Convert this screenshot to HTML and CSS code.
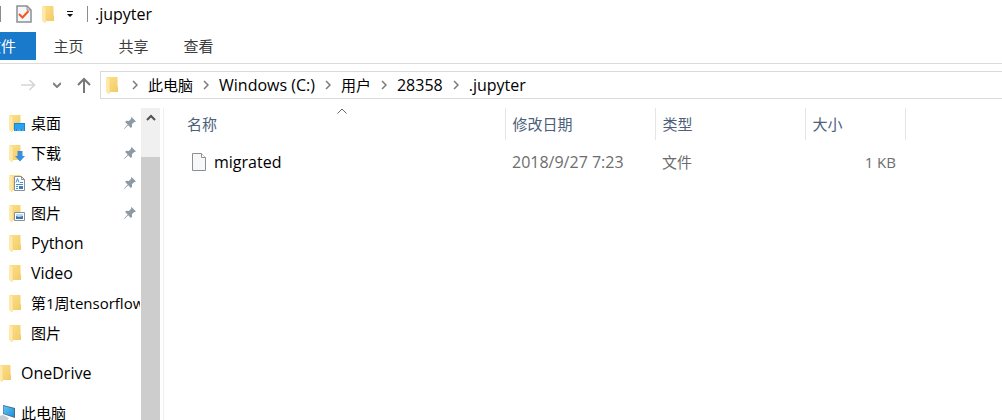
FILE: index.html
```html
<!DOCTYPE html>
<html lang="zh-CN">
<head>
    <meta charset="UTF-8">
    <meta name="viewport" content="width=device-width, initial-scale=1.0">
    <title>.jupyter</title>
    <link rel="stylesheet" href="styles.css">
</head>
<body>
    <!-- Shared icons -->
    <svg class="icon-defs" aria-hidden="true">
        <defs>
            <linearGradient id="fold-back" x1="0" y1="0" x2="1" y2="1">
                <stop offset="0" stop-color="#ffe08a"/>
                <stop offset="1" stop-color="#f0cb66"/>
            </linearGradient>
            <linearGradient id="screen-blue" x1="0" y1="0" x2="1" y2="1">
                <stop offset="0" stop-color="#69c3f2"/>
                <stop offset="1" stop-color="#1f8fd8"/>
            </linearGradient>
        </defs>
        <symbol id="folder" viewBox="0 0 16 18">
            <path d="M1 1h10.500v9.500h.5V16H1z" fill="url(#fold-back)"/>
            <path d="M0 1l4 2v13l-1.500 2L0 16z" fill="#ffe9a8"/>
            <path d="M4 3v13l-1.500 2" fill="none" stroke="#f3d27a" stroke-width=".6"/>
        </symbol>
        <symbol id="pin" viewBox="0 0 12 12">
            <path d="M7.500 0L12 4.500l-1.300.6-.5-.2-2.300 2.400.2 2.500-1.200 1.100-2.700-2.700L.6 11.700 0 12l.3-.7 3.400-3.700L1.100 5l1.100-1.200 2.600.2L7.200 1.700 6.900 1z" fill="#8d99a3"/>
        </symbol>
        <symbol id="chevron" viewBox="0 0 6 10">
            <path d="M1 1l4 4-4 4" fill="none" stroke="#7a7a7a" stroke-width="1.500"/>
        </symbol>
    </svg>

    <div class="window">
        <header class="title-bar">
            <span class="divider"></span>
            <button class="tool check-tool" aria-label="属性">
                <svg width="16" height="18" viewBox="0 0 16 18">
                    <path d="M1 1h10l4 4v12H1z" fill="#f4f6f9" stroke="#8b8f94" stroke-width="1.500"/>
                    <path d="M11 1v4h4" fill="none" stroke="#8b8f94"/>
                    <path d="M3 9l3.500 3.500L12.500 6" fill="none" stroke="#ee5a1c" stroke-width="2"/>
                </svg>
            </button>
            <button class="tool folder-tool" aria-label="新建文件夹">
                <svg width="16" height="18"><use href="#folder"/></svg>
            </button>
            <button class="tool menu-tool" aria-label="自定义快速访问工具栏">
                <svg width="8" height="8" viewBox="0 0 8 8">
                    <path d="M1 1h6v1H1zM1 4h6L4 7z" fill="#111"/>
                </svg>
            </button>
            <span class="divider"></span>
            <h1 class="title latin">.jupyter</h1>
        </header>

        <nav class="ribbon">
            <button class="tab file-tab"><span>文件</span></button>
            <button class="tab">主页</button>
            <button class="tab">共享</button>
            <button class="tab">查看</button>
        </nav>

        <div class="nav-bar">
            <div class="nav-buttons">
                <button class="tool" aria-label="前进" disabled>
                    <svg width="15" height="12" viewBox="0 0 15 12">
                        <path d="M0 6h14M8.500 1l5 5-5 5" fill="none" stroke="#d6d6d6" stroke-width="1.700"/>
                    </svg>
                </button>
                <button class="tool" aria-label="最近浏览的位置">
                    <svg width="8" height="6" viewBox="0 0 8 6">
                        <path d="M0 1l4 4 4-4" fill="none" stroke="#808080" stroke-width="2"/>
                    </svg>
                </button>
                <button class="tool" aria-label="上移">
                    <svg width="14" height="16" viewBox="0 0 14 16">
                        <path d="M7 16V2M1 8l6-6 6 6" fill="none" stroke="#777" stroke-width="2"/>
                    </svg>
                </button>
            </div>
            <div class="address">
                <svg width="16" height="18"><use href="#folder"/></svg>
                <svg class="sep" width="6" height="10"><use href="#chevron"/></svg>
                <a href="#">此电脑</a>
                <svg class="sep" width="6" height="10"><use href="#chevron"/></svg>
                <a class="latin" href="#">Windows (C:)</a>
                <svg class="sep" width="6" height="10"><use href="#chevron"/></svg>
                <a href="#">用户</a>
                <svg class="sep" width="6" height="10"><use href="#chevron"/></svg>
                <a class="latin" href="#">28358</a>
                <svg class="sep" width="6" height="10"><use href="#chevron"/></svg>
                <a class="latin" href="#">.jupyter</a>
            </div>
        </div>

        <div class="content">
            <aside class="sidebar">
                <ul class="tree">
                    <li><a class="item" href="#">
                        <svg width="16" height="18" viewBox="0 0 16 18">
                            <use href="#folder" width="16" height="18"/>
                            <rect x="5" y="9" width="11" height="8" fill="#1386dc"/>
                            <path d="M6 10h9v5H6z" fill="#2ba2f0"/>
                            <path d="M6 16h1M8 16h4M13 16h2" stroke="#9bd7ff" stroke-width=".8"/>
                        </svg>
                        <span>桌面</span>
                        <svg class="pin" width="12" height="12"><use href="#pin"/></svg>
                    </a></li>
                    <li><a class="item" href="#">
                        <svg width="16" height="18" viewBox="0 0 16 18">
                            <use href="#folder" width="16" height="18"/>
                            <path d="M8.500 7h5v5H16l-5 5.500L6 12h2.500z" fill="#3b8ede"/>
                        </svg>
                        <span>下载</span>
                        <svg class="pin" width="12" height="12"><use href="#pin"/></svg>
                    </a></li>
                    <li><a class="item" href="#">
                        <svg width="16" height="18" viewBox="0 0 16 18">
                            <use href="#folder" width="16" height="18"/>
                            <path d="M5.500 2.500h7l3 3v11h-10z" fill="#fff" stroke="#8a8f94"/>
                            <path d="M12.500 2.500v3h3" fill="none" stroke="#8a8f94"/>
                            <path d="M7 8.500l1.500-4 1.500 4M7 10.500h7M11 8.500h3M7 12.500h2M7 14.500h2" fill="none" stroke="#3f8fd2"/>
                            <path d="M10 12h4v3h-4z" fill="#3f7fb5"/>
                        </svg>
                        <span>文档</span>
                        <svg class="pin" width="12" height="12"><use href="#pin"/></svg>
                    </a></li>
                    <li><a class="item" href="#">
                        <svg width="16" height="18" viewBox="0 0 16 18">
                            <use href="#folder" width="16" height="18"/>
                            <path d="M5.500 8.500h10v8h-10z" fill="#fff" stroke="#8a8f94"/>
                            <path d="M7 10h7v5H7z" fill="#b9dcf5"/>
                            <path d="M7 12l3 1 4-1v3H7z" fill="#3a76ad"/>
                        </svg>
                        <span>图片</span>
                        <svg class="pin" width="12" height="12"><use href="#pin"/></svg>
                    </a></li>
                    <li><a class="item" href="#"><svg width="16" height="18"><use href="#folder"/></svg><span class="latin">Python</span></a></li>
                    <li><a class="item" href="#"><svg width="16" height="18"><use href="#folder"/></svg><span class="latin">Video</span></a></li>
                    <li><a class="item" href="#"><svg width="16" height="18"><use href="#folder"/></svg><span>第1周tensorflow</span></a></li>
                    <li><a class="item" href="#"><svg width="16" height="18"><use href="#folder"/></svg><span>图片</span></a></li>
                    <li class="root"><a class="item" href="#"><svg width="16" height="18"><use href="#folder"/></svg><span class="latin">OneDrive</span></a></li>
                    <li class="root"><a class="item" href="#">
                        <svg width="16" height="18" viewBox="0 0 16 18">
                            <path d="M4 1l12 3v10L4 10z" fill="#3d6e91"/>
                            <path d="M4.500 2L15 4.700v8L4.500 9.500z" fill="url(#screen-blue)"/>
                            <path d="M0 12l4-1 6 3-3 4H0z" fill="#c3ccd3"/>
                        </svg>
                        <span>此电脑</span>
                    </a></li>
                </ul>
                <div class="scrollbar">
                    <button class="scroll-up" aria-label="向上滚动">
                        <svg width="10" height="8" viewBox="0 0 10 8">
                            <path d="M1 6l4-4 4 4" fill="none" stroke="#505050" stroke-width="2"/>
                        </svg>
                    </button>
                    <div class="scroll-thumb"></div>
                </div>
            </aside>

            <main class="files">
                <table class="file-table">
                    <thead>
                        <tr>
                            <th class="name">
                                <svg class="sort" width="10" height="6" viewBox="0 0 10 6">
                                    <path d="M.5 5.500L5 1l4.500 4.500" fill="none" stroke="#666"/>
                                </svg>
                                名称
                            </th>
                            <th class="date">修改日期</th>
                            <th class="type">类型</th>
                            <th class="size">大小</th>
                        </tr>
                    </thead>
                    <tbody>
                        <tr>
                            <td class="name">
                                <a class="file" href="#">
                                    <svg width="16" height="18" viewBox="0 0 16 18">
                                        <path d="M1.500.5h9l4 4v13h-13z" fill="#f7f8f9" stroke="#8e8e8e"/>
                                        <path d="M10.500.5v4h4" fill="#fff" stroke="#8e8e8e"/>
                                    </svg>
                                    <span class="latin">migrated</span>
                                </a>
                            </td>
                            <td class="date latin">2018/9/27 7:23</td>
                            <td class="type">文件</td>
                            <td class="size">1 KB</td>
                        </tr>
                    </tbody>
                </table>
            </main>
        </div>
    </div>
</body>
</html>
```

FILE: styles.css
```css
* {
    box-sizing: border-box;
}
body {
    margin: 0;
    background-color: #ffffff;
    color: #000000;
    font-family: "Open Sans", "Noto Sans CJK SC", sans-serif;
    font-size: 15px;
    line-height: 20px;
}
svg {
    display: block;
    flex: none;
}
a {
    color: inherit;
    text-decoration: none;
}
button {
    padding: 0;
    border: none;
    background: none;
    font: inherit;
    color: inherit;
}
.latin {
    font-size: 16px;
}
.icon-defs {
    position: absolute;
    width: 0;
    height: 0;
}
.window {
    display: flex;
    flex-direction: column;
    height: 100vh;
    overflow: hidden;
}

/* Title bar */
.title-bar {
    display: flex;
    align-items: center;
    height: 28px;
    margin-bottom: 4px;
}
.divider {
    width: 1px;
    height: 16px;
    background-color: #8c8c8c;
}
.check-tool {
    margin-left: 15px;
}
.folder-tool {
    margin-left: 10px;
}
.menu-tool {
    margin: 0 13px 0 8px;
}
.title {
    margin: 0 0 0 7px;
    font-weight: normal;
}

/* Ribbon tabs */
.ribbon {
    display: flex;
    height: 32px;
    padding-bottom: 3px;
    border-bottom: 1px solid #dadbdc;
    color: #3c3c3c;
}
.tab {
    width: 65px;
}
.file-tab {
    display: flex;
    align-items: center;
    justify-content: flex-end;
    width: 36px;
    padding-right: 20px;
    overflow: hidden;
    background-color: #1979ca;
    color: #ffffff;
    white-space: nowrap;
}

/* Address row */
.nav-bar {
    display: flex;
    padding-top: 7px;
    margin-bottom: 9px;
}
.nav-buttons {
    display: flex;
    align-items: center;
    justify-content: space-between;
    width: 100px;
    padding: 0 9px 0 21px;
}
.address {
    display: flex;
    flex: 1;
    align-items: center;
    height: 28px;
    padding: 0 0 1px 5px;
    border: 1px solid #d9d9d9;
    border-right: none;
    white-space: nowrap;
}
.sep {
    margin: 0 10px;
}

/* Body */
.content {
    display: flex;
    flex: 1;
    min-height: 0;
}
.sidebar {
    display: flex;
    width: 164px;
    padding-right: 3px;
    border-right: 1px solid #f0f0f0;
}
.tree {
    flex: 1;
    min-width: 0;
    margin: 0 1px 0 0;
    padding: 0;
    overflow: hidden;
    list-style: none;
}
.item {
    display: flex;
    align-items: center;
    gap: 6px;
    height: 30px;
    padding-left: 9px;
    white-space: nowrap;
}
.pin {
    margin: 0 4px 0 auto;
}
.root {
    margin-top: 10px;
}
.root .item {
    margin-left: -10px;
}
.scrollbar {
    display: flex;
    flex-direction: column;
    width: 19px;
    background-color: #f0f0f0;
}
.scroll-up {
    display: flex;
    justify-content: center;
    height: 49px;
    padding-top: 6px;
}
.scroll-thumb {
    flex: 1;
    background-color: #cdcdcd;
}

/* File list */
.files {
    flex: 1;
    padding-left: 15px;
}
.file-table {
    border-collapse: collapse;
    table-layout: fixed;
    width: 726px;
    color: #6d6d6d;
}
.file-table th {
    position: relative;
    height: 32px;
    padding: 0 7px;
    border-right: 1px solid #e5e5e5;
    color: #4c607a;
    font-weight: normal;
    text-align: left;
}
.file-table td {
    height: 44px;
    padding: 0 7px;
}
.file-table .name {
    width: 326px;
    padding-left: 8px;
}
.file-table .date,
.file-table .type {
    width: 150px;
}
.file-table .size {
    width: 100px;
}
.file-table td.size {
    padding-right: 9px;
    text-align: right;
}
.sort {
    position: absolute;
    top: 0;
    left: 50%;
    transform: translateX(-50%);
}
.file {
    display: flex;
    align-items: center;
    gap: 7px;
    padding-left: 4px;
    color: #000000;
}
```
